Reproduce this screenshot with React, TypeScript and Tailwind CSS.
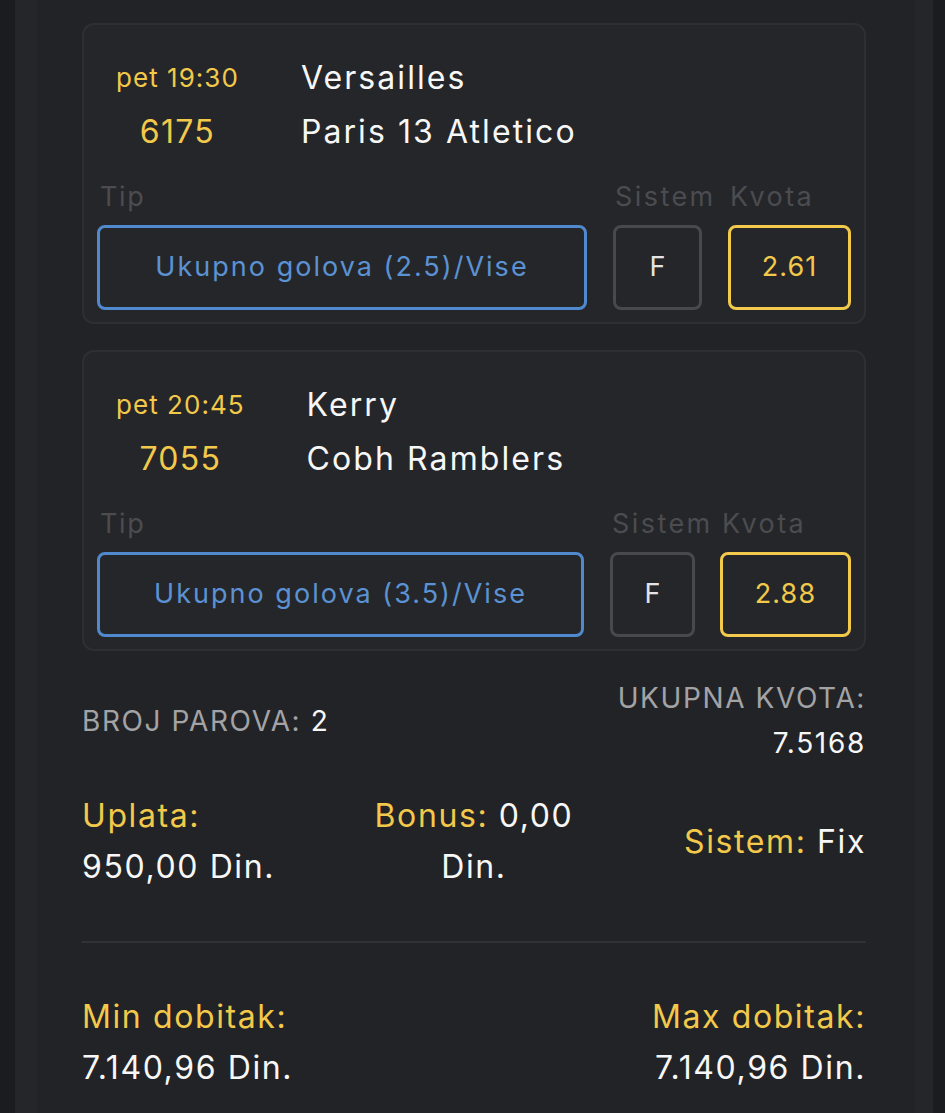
import React from "react";

const FONT = { fontFamily: "Inter, 'Noto Sans', sans-serif" };

type Match = {
  time: string;
  code: string;
  home: string;
  away: string;
  tip: string;
  odd: string;
  col2: string;
  gap2: string;
  col3: string;
};

function MatchCard({ m }: { m: Match }) {
  return (
    <div className="rounded-[12px] border-2 border-[#2e2f32] bg-[#252629] pt-[26px] pb-[12px] px-[13px]">
      <div className="flex items-center gap-[62px] pl-[19px]">
        <div className="flex flex-col items-center text-[#f2c94a]">
          <div className="text-[26px] leading-[54px] tracking-[0.04em]">{m.time}</div>
          <div className="text-[32px] leading-[54px] tracking-[0.04em]">{m.code}</div>
        </div>
        <div className="flex flex-col text-[#f7f7f7] text-[32px] tracking-[0.065em]">
          <div className="leading-[54px]">{m.home}</div>
          <div className="leading-[54px]">{m.away}</div>
        </div>
      </div>
      <div className="mt-[20px] flex items-end">
        <div className="flex-1 flex flex-col">
          <div className="pl-[3px] text-[27px] leading-[36px] text-[#4b4c50] tracking-[0.06em]">Tip</div>
          <div className="mt-[10px] h-[85px] rounded-[8px] border-[3px] border-[#5089cd] flex items-center justify-center text-[27px] text-[#5b92d3] tracking-[0.075em]">
            {m.tip}
          </div>
        </div>
        <div className={`ml-[26px] flex flex-col ${m.col2}`}>
          <div className="pl-[2px] text-[27px] leading-[36px] text-[#4b4c50] tracking-[0.09em] whitespace-nowrap">Sistem</div>
          <div className={`mt-[10px] h-[85px] rounded-[8px] border-[3px] border-[#48494d] flex items-center justify-center text-[27px] text-[#e4e4e4] ${m.gap2}`}>
            F
          </div>
        </div>
        <div className={`flex flex-col ${m.col3}`}>
          <div className="pl-[2px] text-[27px] leading-[36px] text-[#4b4c50] tracking-[0.09em] whitespace-nowrap">Kvota</div>
          <div className="mt-[10px] h-[85px] rounded-[8px] border-[3px] border-[#f2c94a] flex items-center justify-center text-[27px] text-[#f2c94a] tracking-[0.04em]">
            {m.odd}
          </div>
        </div>
      </div>
    </div>
  );
}

const matches: Match[] = [
  {
    time: "pet 19:30",
    code: "6175",
    home: "Versailles",
    away: "Paris 13 Atletico",
    tip: "Ukupno golova (2.5)/Vise",
    odd: "2.61",
    col2: "w-[115px]",
    gap2: "w-[89px]",
    col3: "w-[123px]",
  },
  {
    time: "pet 20:45",
    code: "7055",
    home: "Kerry",
    away: "Cobh Ramblers",
    tip: "Ukupno golova (3.5)/Vise",
    odd: "2.88",
    col2: "w-[110px]",
    gap2: "w-[85px]",
    col3: "w-[131px]",
  },
];

export default function App() {
  return (
    <div className="w-[945px] h-[1113px] overflow-hidden bg-[#1b1c1f]" style={FONT}>
      <div className="ml-[15px] w-[918px] h-full bg-[#222326] border-l-[22px] border-r-[18px] border-[#252629] pl-[45px] pr-[49px] pt-[23px]">
        <div className="flex flex-col gap-[26px]">
          {matches.map((m) => (
            <MatchCard key={m.code} m={m} />
          ))}
        </div>

        <div className="mt-[25px] flex items-center justify-between tracking-[0.1em]">
          <div className="text-[28px] leading-[45px] text-[#a3a3a6]">
            BROJ PAROVA: <span className="text-[#f7f7f7]">2</span>
          </div>
          <div className="flex flex-col items-end text-[28px] leading-[45px]">
            <div className="text-[#a3a3a6]">UKUPNA KVOTA:</div>
            <div className="text-[#f7f7f7] tracking-[0.06em]">7.5168</div>
          </div>
        </div>

        <div className="mt-[24px] grid grid-cols-3 items-center text-[32px] leading-[51px] tracking-[0.05em]">
          <div>
            <div className="text-[#f2c94a]">Uplata:</div>
            <div className="text-[#f7f7f7]">950,00 Din.</div>
          </div>
          <div className="text-center text-[#f7f7f7]">
            <span className="text-[#f2c94a]">Bonus:</span> 0,00
            <br />
            Din.
          </div>
          <div className="text-right">
            <span className="text-[#f2c94a]">Sistem:</span> <span className="text-[#f7f7f7]">Fix</span>
          </div>
        </div>

        <div className="mt-[49px] h-[2px] bg-[#313235]" />

        <div className="mt-[48px] flex justify-between text-[32px] leading-[51px] tracking-[0.05em]">
          <div>
            <div className="text-[#f2c94a]">Min dobitak:</div>
            <div className="text-[#f7f7f7]">7.140,96 Din.</div>
          </div>
          <div className="text-right">
            <div className="text-[#f2c94a]">Max dobitak:</div>
            <div className="text-[#f7f7f7]">7.140,96 Din.</div>
          </div>
        </div>
      </div>
    </div>
  );
}
